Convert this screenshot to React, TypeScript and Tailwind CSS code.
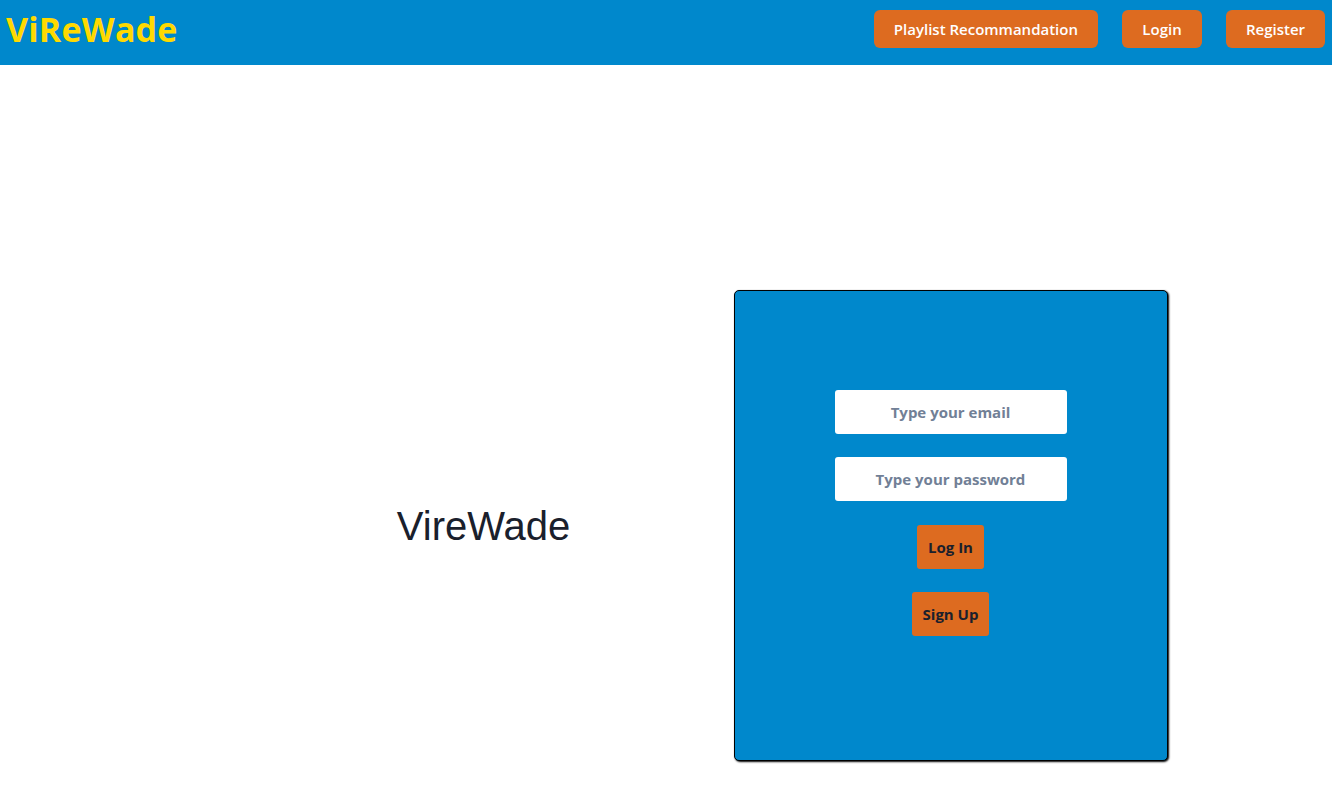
export default function App() {
  return (
    <div className="min-h-screen bg-white font-['Open_Sans',sans-serif]">
      <header className="flex h-[65px] items-center justify-between bg-[#0088cc] pb-[7px] pl-[6px] pr-[7px]">
        <h1 className="text-[34px] font-bold tracking-[0.2px] text-[#ffd900]">ViReWade</h1>
        <nav className="flex items-center gap-6">
          <button className="h-[38px] rounded-md bg-[#dd6b20] px-5 text-[15px] font-semibold text-white">
            Playlist Recommandation
          </button>
          <button className="h-[38px] w-[80px] rounded-md bg-[#dd6b20] text-[15px] font-semibold text-white">
            Login
          </button>
          <button className="h-[38px] w-[99px] rounded-md bg-[#dd6b20] text-[15px] font-semibold text-white">
            Register
          </button>
        </nav>
      </header>

      <main className="flex items-center pl-[250px] pt-[225px]">
        <div className="flex w-[467px] justify-center">
          <p className="font-['Liberation_Sans',Arial,sans-serif] text-[40px] text-[#1a202c]">VireWade</p>
        </div>
        <div className="flex w-[467px] justify-center">
          <div className="flex h-[471px] w-[434px] flex-col items-center rounded-[5px] border border-black bg-[#0088cc] pt-[99px] shadow-[1px_1px_2px_#000]">
            <input
              type="email"
              placeholder="Type your email"
              className="h-[44px] w-[232px] rounded-[3px] bg-white text-center text-[15px] font-bold text-[#4a5568] outline-none placeholder:text-[#718096]"
            />
            <input
              type="password"
              placeholder="Type your password"
              className="mt-[23px] h-[44px] w-[232px] rounded-[3px] bg-white text-center text-[15px] font-bold text-[#4a5568] outline-none placeholder:text-[#718096]"
            />
            <button className="mt-[24px] h-[44px] rounded-[3px] bg-[#dd6b20] px-[11px] text-[15px] font-bold text-[#1a202c]">
              Log In
            </button>
            <button className="mt-[23px] h-[44px] rounded-[3px] bg-[#dd6b20] px-[11px] text-[15px] font-bold text-[#1a202c]">
              Sign Up
            </button>
          </div>
        </div>
      </main>
    </div>
  );
}
